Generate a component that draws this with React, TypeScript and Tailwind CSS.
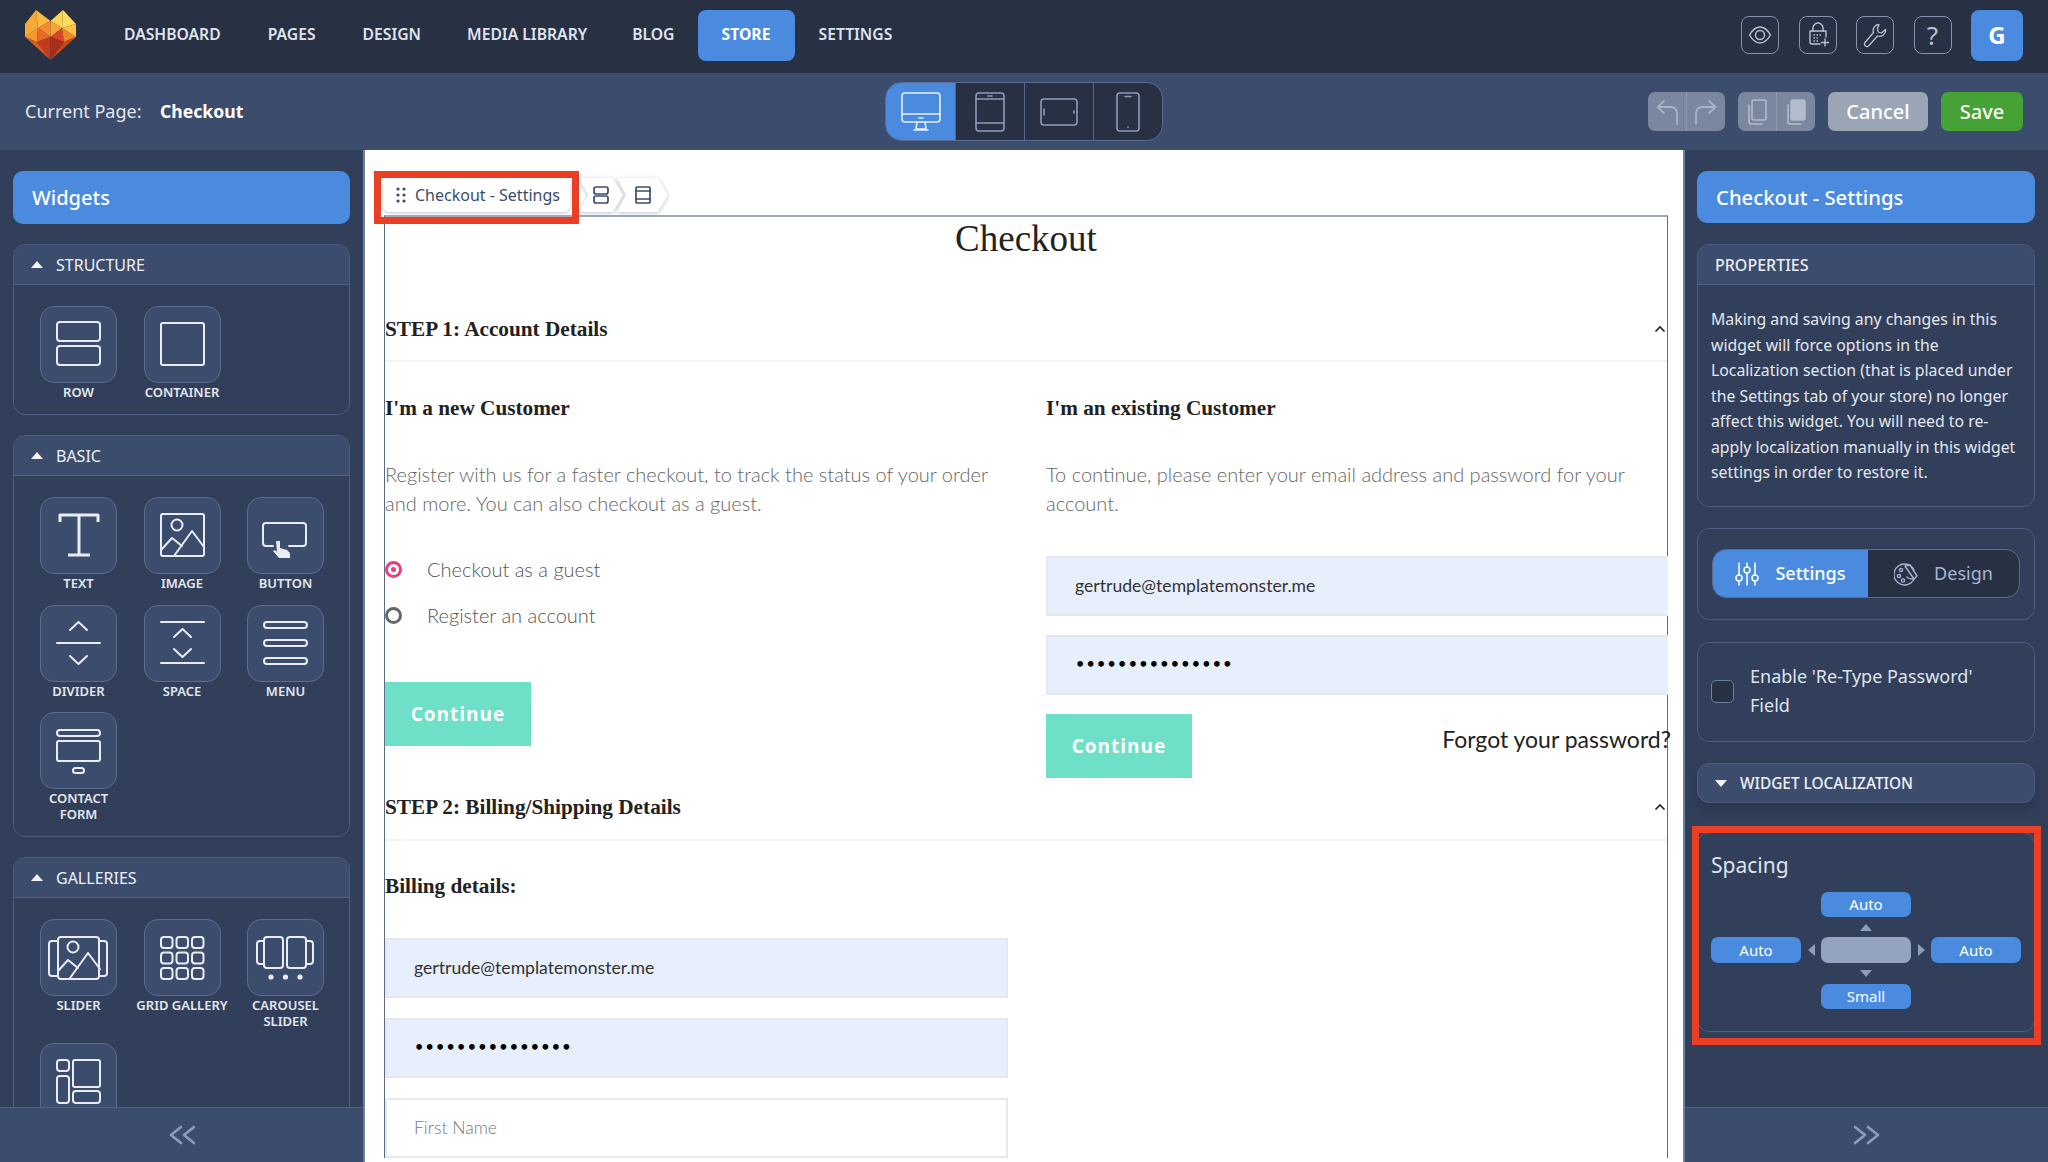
import React from "react";

const S = ({ children, w = 77, h = 77, cls = "" }: { children: React.ReactNode; w?: number; h?: number; cls?: string }) => (
  <svg width={w} height={h} viewBox={`0 0 ${w} ${h}`} fill="none" stroke="currentColor" strokeWidth="2" strokeLinecap="round" strokeLinejoin="round" className={cls}>
    {children}
  </svg>
);

const Mountains = ({ dx = 0 }: { dx?: number }) => (
  <g transform={`translate(${dx} 0)`}>
    <circle cx="33" cy="28" r="5.5" />
    <path d="M18 52 L28 41 L38 49 M30 59 L48 34 L60 50" />
  </g>
);

const chevUp = (y: number) => `M30 ${y + 4} L38.5 ${y - 4} L47 ${y + 4}`;
const chevDown = (y: number) => `M30 ${y - 4} L38.5 ${y + 4} L47 ${y - 4}`;

const tileIcons: Record<string, React.ReactNode> = {
  row: (<><rect x="17" y="16" width="43" height="19" rx="3" /><rect x="17" y="40" width="43" height="19" rx="3" /></>),
  container: <rect x="17" y="17" width="43" height="42" rx="2" />,
  text: <path strokeLinecap="butt" d="M20 25 V18 H58 V25 M39 18 V58 M28 58 H50" strokeWidth="3" />,
  image: (<><rect x="17" y="17" width="43" height="42" rx="2" /><Mountains /></>),
  button: (<><path d="M26 49 H19 a3 3 0 0 1-3-3 V29 a3 3 0 0 1 3-3 H56 a3 3 0 0 1 3 3 V46 a3 3 0 0 1-3 3 H42" /><path fill="currentColor" stroke="none" d="M29 44 h4 v7 l7 2 3 3 v5 H32 l-6-7 2-1 2 2 z" /></>),
  divider: (<><path d={chevUp(21)} /><path d="M17 38 H60" /><path d={chevDown(55)} /></>),
  space: (<><path d="M17 17 H60 M17 58 H60" /><path d={chevUp(28)} /><path d={chevDown(48)} /></>),
  menu: (<><rect x="17" y="17" width="43" height="6" rx="3" /><rect x="17" y="35" width="43" height="6" rx="3" /><rect x="17" y="53" width="43" height="6" rx="3" /></>),
  contact: (<><rect x="17" y="18" width="43" height="6" rx="3" /><rect x="17" y="29" width="43" height="20" rx="2" /><rect x="33" y="56" width="11" height="5" rx="2.5" /></>),
  slider: (<><path d="M18 22 H12 a3 3 0 0 0-3 3 V54 a3 3 0 0 0 3 3 H18 M59 22 H64 a3 3 0 0 1 3 3 V54 a3 3 0 0 1-3 3 H59" /><rect x="18" y="18" width="41" height="42" rx="3" /><Mountains dx={0} /></>),
  grid: (
    <>
      {[18, 33.5, 49].map((y) => [17, 32.5, 48].map((x) => <rect key={`${x}-${y}`} x={x} y={y} width="11.5" height="11" rx="3" />))}
    </>
  ),
  carousel: (<><rect x="17" y="18" width="19" height="31" rx="3" /><rect x="40" y="18" width="19" height="31" rx="3" /><path d="M17 22 H13 a3 3 0 0 0-3 3 V42 a3 3 0 0 0 3 3 H17 M59 22 H63 a3 3 0 0 1 3 3 V42 a3 3 0 0 1-3 3 H59" /><circle cx="24" cy="58" r="1.6" fill="currentColor" /><circle cx="38.5" cy="58" r="1.6" fill="currentColor" /><circle cx="53" cy="58" r="1.6" fill="currentColor" /></>),
  masonry: (<><rect x="17" y="17" width="12" height="11" rx="3" /><rect x="17" y="33" width="12" height="27" rx="3" /><rect x="33" y="17" width="27" height="27" rx="2" /><rect x="33" y="48" width="27" height="12" rx="3" /></>),
};

const Tile = ({ icon, label }: { icon: string; label?: React.ReactNode }) => (
  <div className="flex w-[77px] flex-col items-center">
    <div className="h-[77px] w-[77px] shrink-0 rounded-[14px] border border-[#5a6c90] bg-[#3c4c6c] text-[#e9edf3]">
      <div className="-m-px"><S>{tileIcons[icon]}</S></div>
    </div>
    {label && <div className="mt-[1px] w-[104px] text-center text-[13px] font-semibold leading-[16px] text-[#e3e7ee]">{label}</div>}
  </div>
);

const Tri = ({ down = false }: { down?: boolean }) => (
  <svg width="12" height="7" viewBox="0 0 12 7" className="shrink-0 text-[#f2f4f8]"><polygon points={down ? "0,0 12,0 6,7" : "0,7 12,7 6,0"} fill="currentColor" /></svg>
);

const Section = ({ title, children, pb }: { title: string; children: React.ReactNode; pb: string }) => (
  <section className={`overflow-hidden rounded-[12px] border border-[#4a5c80] ${pb}`}>
    <div className="flex h-[40px] items-center gap-[13px] border-b border-[#4f6287] bg-[#3c4c6c] pl-[17px] text-[16px] leading-none text-[#eef1f5]">
      <Tri />
      <span>{title}</span>
    </div>
    {children}
  </section>
);

const Grid = ({ children }: { children: React.ReactNode }) => (
  <div className="grid grid-cols-[77px_77px_77px] gap-x-[26.5px] gap-y-[13.5px] pl-[26px] pt-[21px]">{children}</div>
);

const Logo = () => (
  <svg width="51" height="50" viewBox="0 0 51 50">
    <polygon points="0,14 11,0 13,18 0,27" fill="#f7a936" />
    <polygon points="11,0 25.5,11 13,18" fill="#fbb93e" />
    <polygon points="25.5,11 38,0 37,18" fill="#fdd44f" />
    <polygon points="38,0 51,14 37,18" fill="#fddc5c" />
    <polygon points="51,14 51,27 37,18" fill="#fbc044" />
    <polygon points="13,18 25.5,11 25.5,27" fill="#f28c2d" />
    <polygon points="25.5,11 37,18 25.5,27" fill="#f7a536" />
    <polygon points="0,27 13,18 12,32" fill="#f49a30" />
    <polygon points="13,18 25.5,27 12,32" fill="#e9692a" />
    <polygon points="25.5,27 37,18 39,32" fill="#d9452a" />
    <polygon points="37,18 51,27 39,32" fill="#ef8a2c" />
    <polygon points="12,32 25.5,27 25.5,50" fill="#c23a1e" />
    <polygon points="25.5,27 39,32 25.5,50" fill="#a82f1a" />
    <polygon points="0,27 12,32 25.5,50" fill="#d95a22" />
    <polygon points="51,27 39,32 25.5,50" fill="#c9491f" />
  </svg>
);

const TopIcon = ({ children }: { children: React.ReactNode }) => (
  <div className="flex h-[38px] w-[38px] items-center justify-center rounded-[8px] border border-[#8593ac] text-[#b9c2d2]">{children}</div>
);

const Device = ({ children, active = false }: { children: React.ReactNode; active?: boolean }) => (
  <div className={`flex h-full w-[69.5px] items-center justify-center border-l border-[#56688c] first:border-l-0 ${active ? "bg-[#4a8be0] text-[#eaf1fb]" : "text-[#8e9cb8]"}`}>{children}</div>
);

const BlueBtn = ({ children }: { children: React.ReactNode }) => (
  <div className="flex h-full items-center justify-center rounded-[7px] bg-[#4a8be0] text-[15px] leading-none text-white">{children}</div>
);

const Arrow = ({ dir }: { dir: "u" | "d" | "l" | "r" }) => {
  const pts = { u: "0,7 12,7 6,0", d: "0,0 12,0 6,7", l: "7,0 7,12 0,6", r: "0,0 0,12 7,6" }[dir];
  const sz = dir === "u" || dir === "d" ? [12, 7] : [7, 12];
  return (
    <div className="flex items-center justify-center">
      <svg width={sz[0]} height={sz[1]} viewBox={`0 0 ${sz[0]} ${sz[1]}`}><polygon points={pts} fill="#8e9dbb" /></svg>
    </div>
  );
};

const Input = ({ children, filled = true, cls = "" }: { children: React.ReactNode; filled?: boolean; cls?: string }) => (
  <div className={`flex h-[60px] items-center border-2 border-[#e6e8ec] pl-[27px] font-['Lato',sans-serif] text-[17.6px] ${filled ? "bg-[#e8effc] text-[#333]" : "bg-white font-light text-[#777]"} ${cls}`}>{children}</div>
);

const Dots = () => <span className="font-['DejaVu_Sans',sans-serif] text-[16px] font-bold leading-none tracking-[0.3px] text-black">•••••••••••••••</span>;

const Continue = () => (
  <div className="flex h-[64px] w-[146px] items-center justify-center bg-[#6fe0c8] font-['Open_Sans',sans-serif] text-[19px] font-bold tracking-[1px] text-white">Continue</div>
);

const Chevron = () => (
  <svg width="12" height="8" viewBox="0 0 12 8" fill="none" stroke="#222" strokeWidth="1.6"><path d="M1.5 6.5 L6 2 L10.5 6.5" /></svg>
);

const H3 = ({ children }: { children: React.ReactNode }) => (
  <h3 className="font-['Liberation_Serif',serif] text-[21.25px] font-bold leading-[30px] text-[#222]">{children}</h3>
);

const Crumb = ({ w, children }: { w: number; children: React.ReactNode }) => (
  <div className="relative -ml-[6px] flex h-[34px] items-center justify-center" style={{ width: w }}>
    <svg width={w} height="34" viewBox={`0 0 ${w} 34`} className="absolute inset-0 drop-shadow-[0_1px_2px_rgba(60,76,108,0.35)]">
      <polygon points={`0,0 ${w - 10},0 ${w},17 ${w - 10},34 0,34 9,17`} fill="#fff" />
    </svg>
    <div className="relative text-[#3c4c6c]">{children}</div>
  </div>
);

export default function App() {
  return (
    <div className="relative flex h-[1162px] w-[2048px] flex-col overflow-hidden bg-[#323f5a] font-['Noto_Sans',sans-serif]">
      {/* Top bar */}
      <header className="flex h-[73px] shrink-0 items-center bg-[#283044] pb-[3px] pl-[25px] pr-[25px]">
        <Logo />
        <nav className="ml-[48px] flex items-center text-[15.7px] font-semibold text-[#dfe4ec]">
          <span>DASHBOARD</span>
          <span className="ml-[47px]">PAGES</span>
          <span className="ml-[47px]">DESIGN</span>
          <span className="ml-[46px]">MEDIA LIBRARY</span>
          <span className="ml-[45px]">BLOG</span>
          <span className="ml-[23px] flex h-[51px] w-[97px] items-center justify-center rounded-[8px] bg-[#4a8be0] font-bold text-white">STORE</span>
          <span className="ml-[24px]">SETTINGS</span>
        </nav>
        <div className="ml-auto flex items-center gap-[19.5px]">
          <TopIcon>
            <S w={24} h={24} cls="stroke-[1.4]">
              <path d="M1.5 12 C5 6 8.5 4 12 4 C15.5 4 19 6 22.5 12 C19 18 15.5 20 12 20 C8.5 20 5 18 1.5 12 Z" />
              <circle cx="12" cy="12" r="4.5" />
            </S>
          </TopIcon>
          <TopIcon>
            <S w={26} h={26} cls="stroke-[1.4]">
              <path d="M8 9 V6 a5 5 0 0 1 10 0 V9" />
              <path d="M15 22 H7 a2 2 0 0 1-2-2 V9 H21 V15" />
              <path d="M9 13 h.5 M12 13 h.5 M15 13 h.5 M9 16 h.5 M12 16 h.5 M9 19 h.5 M12 19 h.5" />
              <path d="M20 17 V24 M16.5 20.5 H23.5" />
            </S>
          </TopIcon>
          <TopIcon>
            <S w={26} h={26} cls="stroke-[1.3]">
              <path d="M17 2.5 a6 6 0 0 0-5.5 8 L3 20.5 a2.5 2.5 0 0 0 3.5 3.5 L15.5 14 a6 6 0 0 0 8-6.5 L19.5 11 L16 10 L15.5 6.5 Z" />
            </S>
          </TopIcon>
          <TopIcon><span className="text-[26px] leading-none">?</span></TopIcon>
          <div className="flex h-[51px] w-[52px] items-center justify-center rounded-[8px] bg-[#4a8be0] text-[24px] font-bold text-white">G</div>
        </div>
      </header>

      {/* Sub bar */}
      <div className="relative flex h-[77px] shrink-0 items-center bg-[#3c4c6c] pl-[25px] pr-[25px]">
        <span className="w-[135px] shrink-0 text-[18px] text-[#e3e7ee]">Current Page:</span>
        <span className="w-[725px] shrink-0 text-[17.6px] font-bold text-white">Checkout</span>
        <div className="flex h-[59px] w-[278px] overflow-hidden rounded-[16px] border border-[#5a6c90] bg-[#283044]">
          <Device active>
            <S w={40} h={40} cls="stroke-[1.6]">
              <rect x="1" y="1" width="38" height="29" rx="3" />
              <path d="M1 22 H39 M18 26 H22 M16 30 L15 37 H25 L24 30 M13 38 H27" />
            </S>
          </Device>
          <Device>
            <S w={30} h={40} cls="stroke-[1.6]">
              <rect x="1" y="1" width="28" height="38" rx="3" />
              <path d="M1 7 H29 M1 31 H29 M13 4 H17" />
            </S>
          </Device>
          <Device>
            <S w={38} h={28} cls="stroke-[1.6]">
              <rect x="1" y="1" width="36" height="26" rx="3" />
              <path d="M4 11 V17 M34 13 V15" />
            </S>
          </Device>
          <Device>
            <S w={24} h={40} cls="stroke-[1.6]">
              <rect x="1" y="1" width="22" height="38" rx="3" />
              <path d="M9 4.5 H15 M12 35 V35.5" />
            </S>
          </Device>
        </div>
        <div className="ml-auto flex items-center">
          <div className="flex h-[39px] w-[77px] overflow-hidden rounded-[7px] bg-[#7a879f] text-[#a9b3c5]">
            <div className="flex w-1/2 items-center justify-center border-r border-[#8d99ae]">
              <S w={26} h={28} cls="stroke-[1.8]"><path d="M23 26 V15 a6 6 0 0 0-6-6 H4 M10 3 L3.5 9 L10 15" /></S>
            </div>
            <div className="flex w-1/2 items-center justify-center">
              <S w={26} h={28} cls="stroke-[1.8]"><path d="M3 26 V15 a6 6 0 0 1 6-6 H22 M16 3 L22.5 9 L16 15" /></S>
            </div>
          </div>
          <div className="ml-[13px] flex h-[39px] w-[77px] overflow-hidden rounded-[7px] bg-[#7a879f] text-[#b3bccc]">
            <div className="flex w-1/2 items-center justify-center border-r border-[#8d99ae]">
              <S w={20} h={28} cls="stroke-[1.6]"><rect x="5" y="2" width="14" height="20" rx="2" /><path d="M2 7 V24 a2 2 0 0 0 2 2 H15" /></S>
            </div>
            <div className="flex w-1/2 items-center justify-center">
              <S w={20} h={28} cls="stroke-[1.6]"><rect x="5" y="2" width="14" height="20" rx="2" fill="currentColor" /><path d="M2 7 V24 a2 2 0 0 0 2 2 H15" /></S>
            </div>
          </div>
          <div className="ml-[13px] flex h-[39px] w-[100px] items-center justify-center rounded-[7px] bg-[#9aa5b5] text-[20px] font-medium text-white">Cancel</div>
          <div className="ml-[13px] flex h-[39px] w-[82px] items-center justify-center rounded-[7px] bg-[#46a234] text-[20px] font-medium text-white">Save</div>
        </div>
      </div>

      {/* Body */}
      <div className="flex min-h-0 flex-1">
        {/* Left panel */}
        <aside className="flex w-[365px] shrink-0 flex-col border-r-2 border-[#6f7f9e]">
          <div className="min-h-0 flex-1 overflow-hidden px-[13px] pt-[21px]">
            <div className="flex h-[53px] items-center rounded-[10px] bg-[#4a8be0] pl-[19px] text-[20px] font-medium text-white">Widgets</div>
            <div className="mt-[20px] flex flex-col gap-[20px]">
              <Section title="STRUCTURE" pb="pb-[14px]">
                <Grid>
                  <Tile icon="row" label="ROW" />
                  <Tile icon="container" label="CONTAINER" />
                </Grid>
              </Section>
              <Section title="BASIC" pb="pb-[14px]">
                <Grid>
                  <Tile icon="text" label="TEXT" />
                  <Tile icon="image" label="IMAGE" />
                  <Tile icon="button" label="BUTTON" />
                  <Tile icon="divider" label="DIVIDER" />
                  <Tile icon="space" label="SPACE" />
                  <Tile icon="menu" label="MENU" />
                  <Tile icon="contact" label={<>CONTACT<br />FORM</>} />
                </Grid>
              </Section>
              <Section title="GALLERIES" pb="pb-[14px]">
                <Grid>
                  <Tile icon="slider" label="SLIDER" />
                  <Tile icon="grid" label="GRID GALLERY" />
                  <Tile icon="carousel" label={<>CAROUSEL<br />SLIDER</>} />
                  <Tile icon="masonry" />
                </Grid>
              </Section>
            </div>
          </div>
          <div className="relative flex h-[55px] shrink-0 items-center justify-center border-t border-[#4f6287] bg-[#3c4c6c] text-[#8e9dbb]">
            <S w={28} h={20} cls="stroke-[2.6]"><path d="M13 2 L3 10 L13 18 M26 2 L16 10 L26 18" /></S>
          </div>
        </aside>

        {/* Canvas */}
        <main className="w-[1318px] shrink-0 overflow-hidden bg-white pl-[19px] pt-[28px]">
          <div className="-ml-[1px] flex h-[34px]">
            <div className="flex h-[34px] w-[187px] items-center gap-[9px] rounded-[6px] bg-white pl-[13px] shadow-[0_1px_3px_rgba(60,76,108,0.35)]">
              <svg width="10" height="16" viewBox="0 0 10 16" className="shrink-0"><g fill="#3c4c6c"><circle cx="2" cy="2" r="1.6" /><circle cx="8" cy="2" r="1.6" /><circle cx="2" cy="8" r="1.6" /><circle cx="8" cy="8" r="1.6" /><circle cx="2" cy="14" r="1.6" /><circle cx="8" cy="14" r="1.6" /></g></svg>
              <span className="text-[16px] text-[#3c4c6c]">Checkout - Settings</span>
            </div>
            <div className="ml-[15px]"><Crumb w={44}>
              <S w={16} h={18} cls="stroke-[1.7]"><rect x="1" y="1" width="14" height="7" rx="2" /><rect x="1" y="10" width="14" height="7" rx="2" /></S>
            </Crumb></div>
            <Crumb w={51}>
              <S w={16} h={18} cls="stroke-[1.7]"><rect x="1" y="1" width="14" height="16" rx="1" /><path d="M1 5 H15 M1 13 H15" /></S>
            </Crumb>
          </div>

          <div className="mt-[3px] w-[1284px] border-x border-t-2 border-x-[#5b6a85] border-t-[#a3abb9]">
            <h1 className="-mt-[1px] text-center font-['Liberation_Serif',serif] text-[37px] leading-[46px] text-[#222]">Checkout</h1>

            <div className="mt-[39px] flex h-[61px] items-center justify-between border-b-2 border-[#f3f4f5] pb-[4px] pr-[1px]">
              <H3>STEP 1: Account Details</H3>
              <Chevron />
            </div>

            <div className="grid grid-cols-[623px_622px] gap-x-[38px]">
              <div>
                <div className="mt-[31px]"><H3>I'm a new Customer</H3></div>
                <p className="mt-[37px] font-['Lato',sans-serif] text-[20px] font-light leading-[28.7px] text-[#666]">Register with us for a faster checkout, to track the status of your order and more. You can also checkout as a guest.</p>
                <div className="mt-[29px] flex h-[46px] items-center font-['Lato',sans-serif] text-[20px] font-light text-[#555]">
                  <span className="flex h-[17px] w-[17px] items-center justify-center rounded-full border-[3px] border-[#ee3b7b]"><span className="h-[5px] w-[5px] rounded-full bg-[#ee3b7b]" /></span>
                  <span className="ml-[25px]">Checkout as a guest</span>
                </div>
                <div className="flex h-[46px] items-center font-['Lato',sans-serif] text-[20px] font-light text-[#555]">
                  <span className="h-[17px] w-[17px] rounded-full border-[3px] border-[#666]" />
                  <span className="ml-[25px]">Register an account</span>
                </div>
                <div className="mt-[44px]"><Continue /></div>
              </div>
              <div>
                <div className="mt-[31px]"><H3>I'm an existing Customer</H3></div>
                <p className="mt-[37px] font-['Lato',sans-serif] text-[20px] font-light leading-[28.7px] text-[#666]">To continue, please enter your email address and password for your account.</p>
                <div className="mt-[39px]"><Input cls="border-r-0">gertrude@templatemonster.me</Input></div>
                <div className="mt-[19px]"><Input cls="border-r-0"><Dots /></Input></div>
                <div className="mt-[19px] flex items-center justify-between">
                  <Continue />
                  <span className="-mr-[3px] -mt-[14px] font-['Lato',sans-serif] text-[23px] text-[#222]">Forgot your password?</span>
                </div>
              </div>
            </div>

            <div className="flex h-[63px] items-center justify-between border-b-2 border-[#f3f4f5] pb-[4px] pr-[1px]">
              <H3>STEP 2: Billing/Shipping Details</H3>
              <Chevron />
            </div>

            <div className="w-[623px]">
              <div className="mt-[30px]"><H3>Billing details:</H3></div>
              <div className="mt-[37px]"><Input>gertrude@templatemonster.me</Input></div>
              <div className="mt-[20px]"><Input><Dots /></Input></div>
              <div className="mt-[20px]"><Input filled={false}>First Name</Input></div>
            </div>
          </div>
        </main>

        {/* Right panel */}
        <aside className="flex w-[365px] shrink-0 flex-col border-l-2 border-[#6f7f9e]">
          <div className="min-h-0 flex-1 overflow-hidden pl-[12px] pr-[13px] pt-[21px]">
            <div className="flex h-[52px] items-center rounded-[10px] bg-[#4a8be0] pl-[19px] text-[20.3px] font-medium text-white">Checkout - Settings</div>

            <section className="mt-[21px] h-[263px] overflow-hidden rounded-[12px] border border-[#4a5c80]">
              <div className="flex h-[40px] items-center border-b border-[#4f6287] bg-[#3c4c6c] pl-[17px] text-[16px] font-medium text-[#e9edf3]">PROPERTIES</div>
              <p className="px-[13px] pt-[22px] text-[15.8px] leading-[25.5px] text-[#e3e7ee]">Making and saving any changes in this widget will force options in the Localization section (that is placed under the Settings tab of your store) no longer affect this widget. You will need to re-apply localization manually in this widget settings in order to restore it.</p>
            </section>

            <section className="mt-[21px] h-[92px] rounded-[12px] border border-[#4a5c80] px-[14px] pt-[20px]">
              <div className="flex h-[49px] overflow-hidden rounded-[14px] border border-[#5a6c90] bg-[#283044] text-[18px]">
                <div className="flex w-[155px] items-center justify-center gap-[16px] bg-[#4a8be0] font-medium text-white">
                  <S w={24} h={24} cls="stroke-[1.5]">
                    <path d="M4 1 V13 M4 19 V23 M12 1 V5 M12 11 V23 M20 1 V13 M20 19 V23" />
                    <circle cx="4" cy="16" r="3" /><circle cx="12" cy="8" r="3" /><circle cx="20" cy="16" r="3" />
                  </S>
                  <span>Settings</span>
                </div>
                <div className="flex flex-1 items-center justify-center gap-[16px] text-[#a6b4d2]">
                  <S w={24} h={24} cls="stroke-[1.4]">
                    <path d="M20 8 A10.5 10.5 0 1 0 20 17 C17 17 14 17 13 15" />
                    <circle cx="7" cy="8" r="1.6" /><circle cx="5" cy="14" r="1.6" /><circle cx="9" cy="18.5" r="1.6" />
                    <path d="M11 4 L16 3 L23 14 L20 17 Z" />
                  </S>
                  <span>Design</span>
                </div>
              </div>
            </section>

            <section className="mt-[22px] flex h-[100px] items-center rounded-[12px] border border-[#4a5c80] pl-[13px] pr-[10px]">
              <div className="mt-[-2px] h-[23px] w-[23px] shrink-0 rounded-[5px] border border-[#6f7f9e] bg-[#283044]" />
              <span className="ml-[16px] -mt-[3px] text-[18px] leading-[28.5px] text-[#dfe4ec]">Enable 'Re-Type Password'<br />Field</span>
            </section>

            <section className="mt-[21px] flex h-[40px] items-center gap-[13px] rounded-[12px] border border-[#4a5c80] bg-[#3c4c6c] pl-[17px] pt-[1px] text-[15.4px] font-medium text-[#eef1f5] shadow-[0_6px_10px_rgba(30,38,56,0.35)]">
              <Tri down />
              <span>WIDGET LOCALIZATION</span>
            </section>

            <section className="mt-[29px] rounded-[12px] border border-[#4a5c80] px-[13px] pb-[22px] pt-[18px]">
              <div className="text-[21px] leading-[28px] text-[#dfe4ec]">Spacing</div>
              <div className="mt-[13px] grid grid-cols-[90px_20px_90px_20px_90px] grid-rows-[25px_20px_26px_21px_25px]">
                <div /><div /><BlueBtn>Auto</BlueBtn><div /><div />
                <div /><div /><Arrow dir="u" /><div /><div />
                <BlueBtn>Auto</BlueBtn><Arrow dir="l" /><div className="rounded-[7px] bg-[#94a3c1]" /><Arrow dir="r" /><BlueBtn>Auto</BlueBtn>
                <div /><div /><Arrow dir="d" /><div /><div />
                <div /><div /><BlueBtn>Small</BlueBtn><div /><div />
              </div>
            </section>
          </div>
          <div className="flex h-[55px] shrink-0 items-center justify-center border-t border-[#4f6287] bg-[#3c4c6c] text-[#8e9dbb]">
            <S w={28} h={20} cls="stroke-[2.6]"><path d="M2 2 L12 10 L2 18 M15 2 L25 10 L15 18" /></S>
          </div>
        </aside>
      </div>

      {/* Red annotation frames */}
      <div className="pointer-events-none absolute left-[374px] top-[171px] h-[53px] w-[205px] border-[7px] border-[#ea3f24]" />
      <div className="pointer-events-none absolute left-[1692px] top-[826px] h-[219px] w-[349px] border-[7px] border-[#ea3f24]" />
    </div>
  );
}
